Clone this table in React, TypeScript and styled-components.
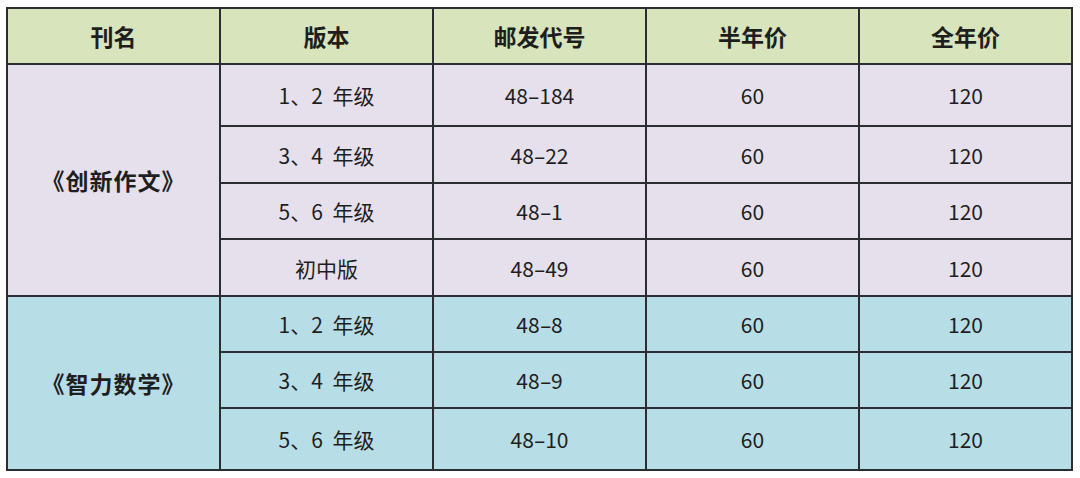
import React from "react";
import styled, { createGlobalStyle } from "styled-components";

const GlobalStyle = createGlobalStyle`
    html, body {
        margin: 0;
        padding: 0;
        background: #ffffff;
    }
`;

const Page = styled.div`
    padding: 7px 6px;
    font-family: "Noto Sans CJK SC", "Noto Sans", sans-serif;
    color: #1e1e1e;
`;

const Table = styled.table`
    width: 1067px;
    border-collapse: collapse;
    table-layout: fixed;
    border: 2px solid #2a2e30;
`;

const Row = styled.tr<{ $h: number }>`
    height: ${(p) => p.$h}px;
`;

const HeadCell = styled.th`
    background: #d8e4bc;
    border: 2px solid #2a2e30;
    font-size: 23px;
    font-weight: 700;
    text-align: center;
    vertical-align: middle;
    padding: 0;
`;

const Cell = styled.td<{ $tone: "purple" | "blue" }>`
    background: ${(p) => (p.$tone === "purple" ? "#e5e0ec" : "#b7dde7")};
    border: 2px solid #2a2e30;
    font-size: 21px;
    font-weight: 400;
    word-spacing: 5px;
    text-align: center;
    vertical-align: middle;
    padding: 0;
`;

const TitleCell = styled(Cell)`
    font-size: 23px;
    font-weight: 700;
    letter-spacing: 1px;
    word-spacing: 0;
`;

// 邮发代号里的横线比字体自带的连字符更长
const Dash = styled.span`
    display: inline-block;
    margin: 0 2px;
    transform: scaleX(1.7);
`;

type Edition = { name: string; code: string; h: number };
type Group = { title: string; tone: "purple" | "blue"; editions: Edition[] };

const groups: Group[] = [
    {
        title: "《创新作文》",
        tone: "purple",
        editions: [
            { name: "1、2 年级", code: "48-184", h: 62 },
            { name: "3、4 年级", code: "48-22", h: 57 },
            { name: "5、6 年级", code: "48-1", h: 56 },
            { name: "初中版", code: "48-49", h: 57 },
        ],
    },
    {
        title: "《智力数学》",
        tone: "blue",
        editions: [
            { name: "1、2 年级", code: "48-8", h: 56 },
            { name: "3、4 年级", code: "48-9", h: 56 },
            { name: "5、6 年级", code: "48-10", h: 62 },
        ],
    },
];

const Code: React.FC<{ value: string }> = ({ value }) => {
    const [head, tail] = value.split("-");
    return (
        <>
            {head}
            <Dash>-</Dash>
            {tail}
        </>
    );
};

const App: React.FC = () => {
    return (
        <Page>
            <GlobalStyle />
            <Table>
                <thead>
                    <Row $h={56}>
                        <HeadCell>刊名</HeadCell>
                        <HeadCell>版本</HeadCell>
                        <HeadCell>邮发代号</HeadCell>
                        <HeadCell>半年价</HeadCell>
                        <HeadCell>全年价</HeadCell>
                    </Row>
                </thead>
                <tbody>
                    {groups.map((g) =>
                        g.editions.map((e, i) => (
                            <Row $h={e.h} key={g.title + e.code}>
                                {i === 0 && (
                                    <TitleCell $tone={g.tone} rowSpan={g.editions.length}>
                                        {g.title}
                                    </TitleCell>
                                )}
                                <Cell $tone={g.tone}>{e.name}</Cell>
                                <Cell $tone={g.tone}>
                                    <Code value={e.code} />
                                </Cell>
                                <Cell $tone={g.tone}>60</Cell>
                                <Cell $tone={g.tone}>120</Cell>
                            </Row>
                        ))
                    )}
                </tbody>
            </Table>
        </Page>
    );
};

export default App;
